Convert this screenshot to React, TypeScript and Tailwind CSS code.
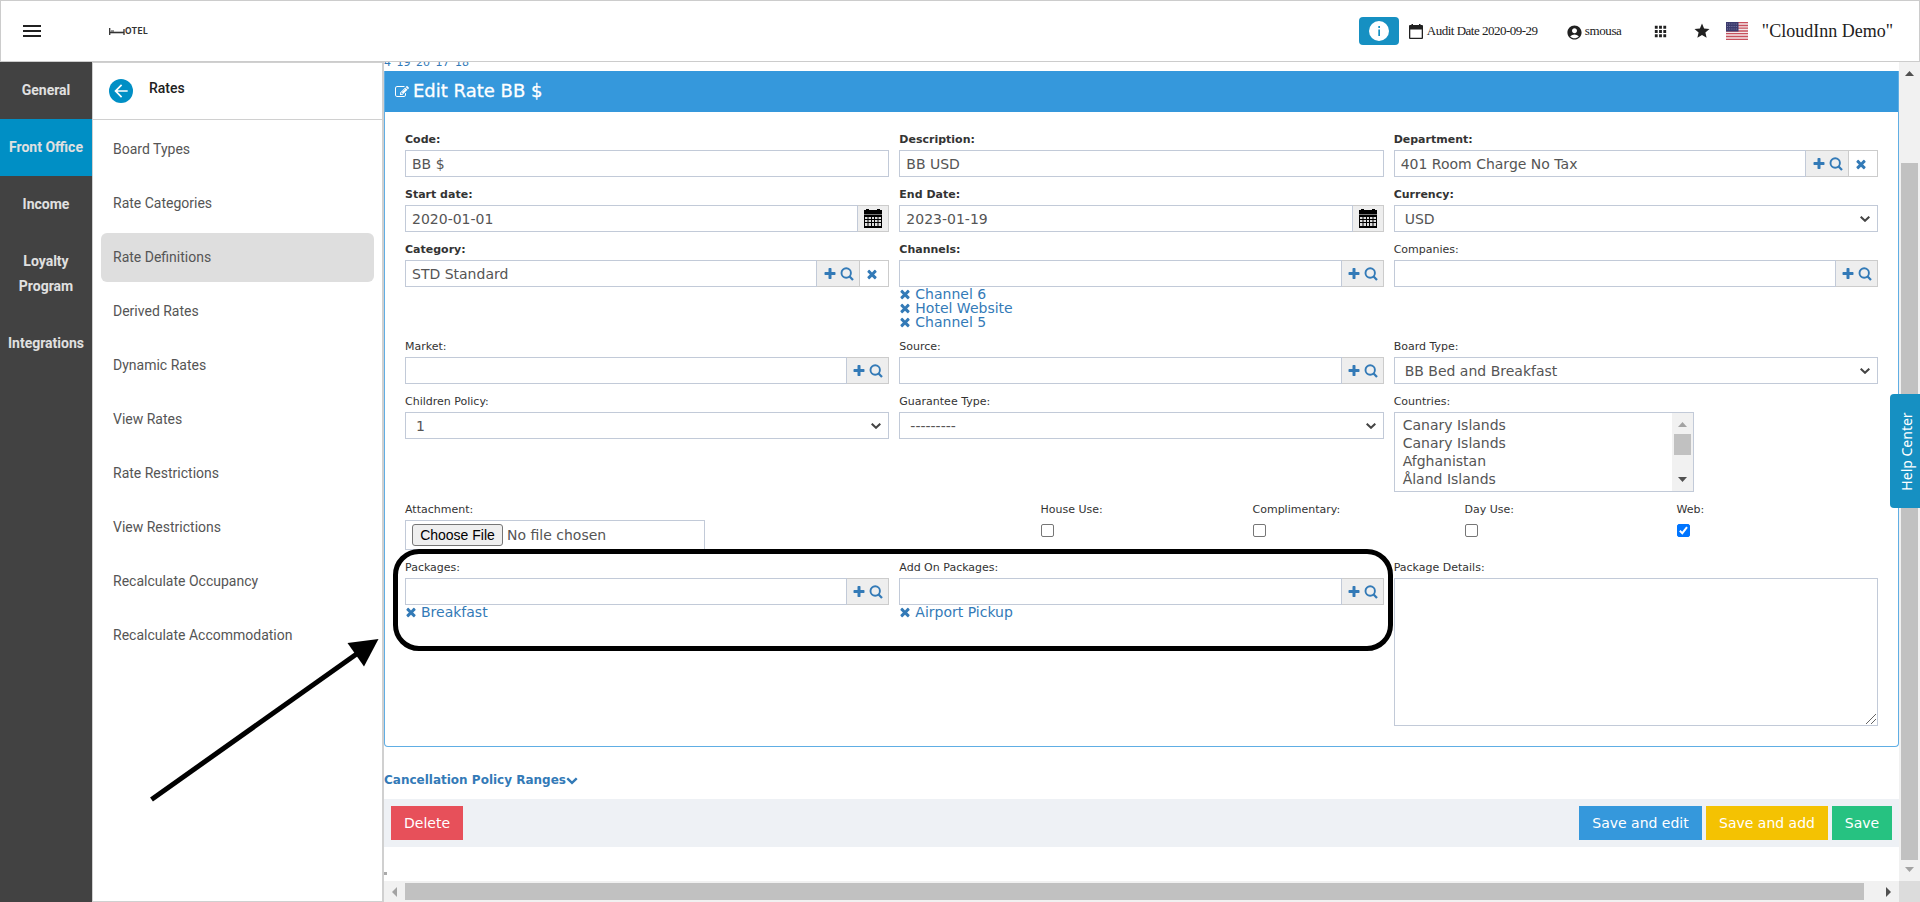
import type { ReactNode } from 'react';
import { MdAccountCircle, MdApps, MdArrowBack, MdMenu, MdStar } from 'react-icons/md';

const PATHS = {
  plus: 'M1600 736v192q0 40-28 68t-68 28h-416v416q0 40-28 68t-68 28h-192q-40 0-68-28t-28-68v-416h-416q-40 0-68-28t-28-68v-192q0-40 28-68t68-28h416v-416q0-40 28-68t68-28h192q40 0 68 28t28 68v416h416q40 0 68 28t28 68z',
  times:
    'M1490 1322q0 40-28 68l-136 136q-28 28-68 28t-68-28l-294-294-294 294q-28 28-68 28t-68-28l-136-136q-28-28-28-68t28-68l294-294-294-294q-28-28-28-68t28-68l136-136q28-28 68-28t68 28l294 294 294-294q28-28 68-28t68 28l136 136q28 28 28 68t-28 68l-294 294 294 294q28 28 28 68z',
  edit: 'M888 1184l116-116-152-152-116 116v56h96v96h56zm440-720q-16-16-33 1l-350 350q-17 17-1 33t33-1l350-350q17-17 1-33zm80 594v190q0 119-84.5 203.5t-203.5 84.5h-832q-119 0-203.5-84.5t-84.5-203.5v-832q0-119 84.5-203.5t203.5-84.5h832q63 0 117 25 15 7 18 23 3 17-9 29l-49 49q-14 14-32 8-23-6-45-6h-832q-66 0-113 47t-47 113v832q0 66 47 113t113 47h832q66 0 113-47t47-113v-126q0-13 9-22l64-64q15-15 35-7t20 29zm-96-738l288 288-672 672h-288v-288zm444 132l-92 92-288-288 92-92q28-28 68-28t68 28l152 152q28 28 28 68t-28 68z',
  chevron:
    'M1683 808l-742 741q-19 19-45 19t-45-19l-742-741q-19-19-19-45.5t19-45.5l166-165q19-19 45-19t45 19l531 531 531-531q19-19 45-19t45 19l166 165q19 19 19 45.5t-19 45.5z',
};

function Icon({ name, className }: { name: keyof typeof PATHS; className: string }) {
  return (
    <svg viewBox="0 0 1792 1792" fill="currentColor" className={className}>
      <path d={PATHS[name]} />
    </svg>
  );
}

const modules = ['General', 'Front Office', 'Income', 'Loyalty Program', 'Integrations'];

const rateLinks = [
  'Board Types',
  'Rate Categories',
  'Rate Definitions',
  'Derived Rates',
  'Dynamic Rates',
  'View Rates',
  'Rate Restrictions',
  'View Restrictions',
  'Recalculate Occupancy',
  'Recalculate Accommodation',
];

function Field({ label, required, children }: { label: string; required?: boolean; children?: ReactNode }) {
  return (
    <div className="min-w-0">
      <div className={`h-[22px] whitespace-nowrap text-[11px] leading-6 text-[#333] ${required ? 'font-bold' : ''}`}>{label}</div>
      {children}
    </div>
  );
}

function TextBox({ value }: { value: string }) {
  return <div className="h-[27px] min-w-0 flex-1 border border-[#c2cad8] pl-1.5 text-[14px] leading-[27px]">{value}</div>;
}

function Lookup({ value = '', clearable }: { value?: string; clearable?: boolean }) {
  return (
    <div className="flex h-[27px]">
      <TextBox value={value} />
      <div
        className={`flex items-center gap-[3px] border border-l-0 border-[#ccc] bg-[#eee] text-[#337ab7] ${
          clearable ? 'w-[43px] pl-[6px]' : 'w-[42px] pl-[5px]'
        }`}
      >
        <Icon name="plus" className="size-[14px]" />
        <svg viewBox="0 0 14 14" className="mt-px size-[14px]" fill="none" stroke="currentColor">
          <circle cx="6.200" cy="6" r="4.700" strokeWidth="1.900" />
          <path d="m9.600 9.400 3.400 3.600" strokeWidth="2.200" />
        </svg>
      </div>
      {clearable && (
        <div className="flex w-[29px] items-center border border-l-0 border-[#ccc] pl-[5px] text-[#337ab7]">
          <Icon name="times" className="mt-px size-[14px]" />
        </div>
      )}
    </div>
  );
}

function DateBox({ value }: { value: string }) {
  return (
    <div className="flex h-[27px]">
      <TextBox value={value} />
      <div className="flex w-[31px] items-center justify-center border border-l-0 border-[#ccc] bg-[#eee]">
        <svg viewBox="0 0 18 19" className="h-[19px] w-[18px]">
          <path d="M0 1h2V0h3v1h8V0h3v1h2v4H0z" fill="#000" />
          <path d="M0 6h18v13H0z" fill="#000" />
          <path d="M0 5.5h18" stroke="#777" />
          <path
            d="M1 8h2.500v2H1zM4.500 8H7v2H4.500zM8 8h2v2H8zM11 8h2.500v2H11zM14.500 8H17v2h-2.500zM1 11h2.500v2H1zM4.500 11H7v2H4.500zM8 11h2v2H8zM11 11h2.500v2H11zM14.500 11H17v2h-2.500zM1 14h2.500v3H1zM4.500 14H7v3H4.500zM8 14h2v3H8zM11 14h2.500v3H11zM14.500 14H17v3h-2.500z"
            fill="#ddd"
          />
        </svg>
      </div>
    </div>
  );
}

function SelectBox({ value }: { value: string }) {
  return (
    <div className="flex h-[27px] items-center justify-between border border-[#c2cad8] pr-[7px] pl-2.5 text-[14px] leading-[27px]">
      <span className="h-[25px]">{value}</span>
      <svg viewBox="0 0 10 6" className="h-[6px] w-[10px]" fill="none" stroke="#444" strokeWidth="2">
        <path d="M.7.7 5 4.8 9.3.7" />
      </svg>
    </div>
  );
}

function Chosen({ items }: { items: string[] }) {
  return (
    <ul className="text-[14px] leading-[14px] text-[#337ab7]">
      {items.map((item) => (
        <li key={item} className="flex h-[14px] items-center gap-[3px]">
          <Icon name="times" className="-ml-[1px] size-[14px]" />
          {item}
        </li>
      ))}
    </ul>
  );
}

function Check({ label, checked }: { label: string; checked?: boolean }) {
  return (
    <div className="w-[212px] shrink-0">
      <Field label={label}>
        <div
          className={`mt-1 flex size-[13px] items-center justify-center rounded-[2px] border ${
            checked ? 'border-[#0075ff] bg-[#0075ff]' : 'border-[#767676] bg-white'
          }`}
        >
          {checked && (
            <svg viewBox="0 0 11 11" className="size-[11px] shrink-0" fill="none" stroke="#fff" strokeWidth="2">
              <path d="M1.8 5.8 4.3 8.2 9 2.2" />
            </svg>
          )}
        </div>
      </Field>
    </div>
  );
}

function Flag() {
  return (
    <svg viewBox="0 0 22 18" className="h-[18px] w-[22px]">
      <path d="M0 0h22v18H0z" fill="#f3e9ea" />
      <path d="M0 .7h22M0 3.500h22M0 6.200h22M0 9h22M0 11.700h22M0 14.500h22M0 17.300h22" stroke="#c8515e" strokeWidth="1.3" />
      <path d="M0 0h12.500v9.500H0z" fill="#3c3b6e" />
      <path d="M1 2h11M1 4.500h11M1 7h11" stroke="#8e8eb0" strokeDasharray="1 1.200" strokeWidth=".8" />
    </svg>
  );
}

function Header() {
  return (
    <header className="flex h-[62px] shrink-0 items-center border border-[#ccc] bg-white text-[#212121]">
      <MdMenu className="ml-[19px] size-6" />
      {/* bed shaped H, then the rest of the word */}
      <div className="ml-[65px] flex items-center font-['Inter']">
        <svg viewBox="0 0 16 7" className="h-[7px] w-4" fill="none" stroke="#333">
          <path d="M.7 0v7M15 1v6" strokeWidth="1.300" />
          <path d="M1 4.500h14" strokeWidth="1.600" />
          <path d="M2 3h3" />
        </svg>
        <span className="text-[8.5px] leading-[7px] font-bold tracking-[0.3px] text-[#333]">OTEL</span>
      </div>
      <div className="ml-auto flex items-center font-['Liberation_Serif']">
        <div className="flex h-7 w-10 items-center justify-center rounded bg-[#1690c2]">
          <svg viewBox="0 0 20 20" className="size-5">
            <circle cx="10" cy="10" r="10" fill="#fff" />
            <path d="M9.300 5h1.700v2H9.300zM9.300 8.500H11V15H9.300z" fill="#1690c2" />
          </svg>
        </div>
        <svg viewBox="0 0 14 15" className="ml-[10px] h-[15px] w-[14px]" fill="#212121">
          <path d="M1 1h1.500V0H4v1h6V0h1.500v1H13a1 1 0 0 1 1 1v12a1 1 0 0 1-1 1H1a1 1 0 0 1-1-1V2a1 1 0 0 1 1-1zm.3 4.500v8.200h11.400V5.500z" />
        </svg>
        <span className="ml-[4px] w-[111px] text-[13px] tracking-[-0.5px] whitespace-nowrap">Audit Date 2020-09-29</span>
        <MdAccountCircle className="mt-[3px] ml-[28px] size-[17px]" />
        <span className="ml-[2px] w-[37px] text-[13px] tracking-[-0.4px]">smousa</span>
        <MdApps className="ml-[30px] size-[17px]" />
        <MdStar className="ml-[24px] size-[18px]" />
        <div className="ml-[15px]">
          <Flag />
        </div>
        <span className="mr-[26px] ml-[14px] text-[18px] whitespace-nowrap">&quot;CloudInn Demo&quot;</span>
      </div>
    </header>
  );
}

function ModuleRail() {
  return (
    <nav className="w-[92px] shrink-0 bg-[#424242] text-center font-['Roboto'] text-[14px] leading-[25px] font-bold text-[#e0e0e0]">
      {modules.map((name) => (
        <div key={name} className={`px-1 py-4 ${name === 'Front Office' ? 'bg-[#008fc5]' : ''}`}>
          {name}
        </div>
      ))}
    </nav>
  );
}

function RatesMenu() {
  return (
    <aside className="w-[292px] shrink-0 border border-r-2 border-[#d0d0d0] bg-white font-['Roboto'] text-[14px]">
      <div className="flex h-[57px] items-center border-b border-[#d0d0d0] pl-4">
        <div className="flex size-6 items-center justify-center rounded-full bg-[#008fc5] text-white">
          <MdArrowBack className="size-5" />
        </div>
        <span className="mb-1.5 ml-4 font-medium text-[#212121]">Rates</span>
      </div>
      <div className="flex flex-col gap-[5px] px-2 pt-[5px]">
        {rateLinks.map((name) => (
          <div
            key={name}
            className={`h-[49px] rounded-md pl-3 leading-[48px] text-[#555] ${name === 'Rate Definitions' ? 'bg-[#dedede]' : ''}`}
          >
            {name}
          </div>
        ))}
      </div>
    </aside>
  );
}

function Countries() {
  return (
    <div className="flex h-20 w-[300px] border border-[#c2cad8] text-[14px] leading-[18px]">
      <div className="flex-1 pt-[3px] pl-2">
        <div>Canary Islands</div>
        <div>Canary Islands</div>
        <div>Afghanistan</div>
        <div>Åland Islands</div>
      </div>
      <div className="flex w-[21px] flex-col items-center bg-[#f1f1f1]">
        <svg viewBox="0 0 9 5" className="mt-[9px] h-[5px] w-[9px]" fill="#a3a3a3">
          <path d="M4.500 0 9 5H0z" />
        </svg>
        <div className="mt-[7px] h-[21px] w-[17px] bg-[#c1c1c1]" />
        <svg viewBox="0 0 9 5" className="mt-[22px] h-[5px] w-[9px]" fill="#505050">
          <path d="M4.500 5 9 0H0z" />
        </svg>
      </div>
    </div>
  );
}

function RateForm() {
  return (
    <section className="mt-[9px] h-[676px] shrink-0 rounded-b-sm border border-t-0 border-[#60aee4]">
      <h1 className="flex h-[41px] items-center gap-1 bg-[#3598dc] pl-[10px] text-[18px] text-white">
        <Icon name="edit" className="size-[14px]" />
        <span className="-mt-[3px] [-webkit-text-stroke:0.3px_white]">Edit Rate BB $</span>
      </h1>
      <div className="flex flex-col gap-1.5 pt-4 pr-5 pl-5">
        <div className="grid grid-cols-3 gap-x-2.5 gap-y-1.5">
          <Field label="Code:" required>
            <div className="flex"><TextBox value="BB $" /></div>
          </Field>
          <Field label="Description:" required>
            <div className="flex"><TextBox value="BB USD" /></div>
          </Field>
          <Field label="Department:" required>
            <Lookup value="401 Room Charge No Tax" clearable />
          </Field>
          <Field label="Start date:" required>
            <DateBox value="2020-01-01" />
          </Field>
          <Field label="End Date:" required>
            <DateBox value="2023-01-19" />
          </Field>
          <Field label="Currency:" required>
            <SelectBox value="USD" />
          </Field>
          <Field label="Category:" required>
            <Lookup value="STD Standard" clearable />
          </Field>
          <Field label="Channels:" required>
            <Lookup />
            <Chosen items={['Channel 6', 'Hotel Website', 'Channel 5']} />
          </Field>
          <Field label="Companies:">
            <Lookup />
          </Field>
          <Field label="Market:">
            <Lookup />
          </Field>
          <Field label="Source:">
            <Lookup />
          </Field>
          <Field label="Board Type:">
            <SelectBox value="BB Bed and Breakfast" />
          </Field>
          <Field label="Children Policy:">
            <SelectBox value="1" />
          </Field>
          <Field label="Guarantee Type:">
            <SelectBox value="---------" />
          </Field>
          <Field label="Countries:">
            <Countries />
          </Field>
        </div>
        <div className="flex">
          <div className="w-[635.5px] shrink-0">
            <Field label="Attachment:">
              <div className="flex h-[30px] w-[300px] items-center border border-[#c2cad8] pl-1.5 text-[14px]">
                <span className="h-[22px] w-[91px] rounded-[3px] border border-[#767676] bg-[#efefef] text-center font-['Liberation_Sans'] text-[14px] leading-5 text-black">
                  Choose File
                </span>
                <span className="ml-1">No file chosen</span>
              </div>
            </Field>
          </div>
          <Check label="House Use:" />
          <Check label="Complimentary:" />
          <Check label="Day Use:" />
          <Check label="Web:" checked />
        </div>
        <div className="grid grid-cols-3 gap-x-2.5">
          <Field label="Packages:">
            <Lookup />
            <Chosen items={['Breakfast']} />
          </Field>
          <Field label="Add On Packages:">
            <Lookup />
            <Chosen items={['Airport Pickup']} />
          </Field>
          <Field label="Package Details:">
            <div className="flex h-[148px] items-end justify-end border border-[#c2cad8] p-px">
              <svg viewBox="0 0 10 10" className="size-[10px]" stroke="#666" fill="none">
                <path d="M0 10 10 0M5 10l5-5" />
              </svg>
            </div>
          </Field>
        </div>
      </div>
    </section>
  );
}

function Actions() {
  return (
    <div className="flex h-12 shrink-0 items-center gap-1 bg-[#eef1f5] px-[7px] text-center text-[14px] leading-[34px] text-white">
      <div className="mr-auto h-[34px] w-[72px] bg-[#e7505a]">Delete</div>
      <div className="h-[34px] w-[123px] bg-[#3598dc]">Save and edit</div>
      <div className="h-[34px] w-[122px] bg-[#f4c202]">Save and add</div>
      <div className="h-[34px] w-[60px] bg-[#26c281]">Save</div>
    </div>
  );
}

export default function App() {
  return (
    <div className="relative flex h-[902px] w-[1920px] flex-col overflow-hidden bg-white font-['DejaVu_Sans'] text-[#555]">
      <Header />
      <div className="flex min-h-0 flex-1">
        <ModuleRail />
        <RatesMenu />
        <div className="flex w-[1515px] shrink-0 flex-col">
          <div className="relative flex h-[819px] flex-col overflow-hidden">
            {/* page numbers scrolled half under the header */}
            <div className="absolute -top-[6px] left-0 text-[11px] leading-[14px] text-[#337ab7] [word-spacing:2px]">4 19 20 17 18</div>
            <RateForm />
            <div className="mt-6 flex h-[18px] items-center text-[12px] font-bold text-[#337ab7]">
              Cancellation Policy Ranges
              <Icon name="chevron" className="size-[12px]" />
            </div>
            <div className="h-[10px] shrink-0" />
            <Actions />
            <div className="mt-[25px] size-[3px] bg-[#aaa]" />
          </div>
          <div className="flex h-[21px] items-center bg-[#f1f1f1]">
            <svg viewBox="0 0 5 10" className="ml-2 h-[10px] w-[5px]" fill="#a3a3a3">
              <path d="M5 0v10L0 5z" />
            </svg>
            <div className="ml-2 h-[17px] w-[1459px] bg-[#c1c1c1]" />
            <svg viewBox="0 0 5 10" className="ml-[22px] h-[10px] w-[5px]" fill="#505050">
              <path d="M0 0v10l5-5z" />
            </svg>
          </div>
        </div>
        <div className="flex flex-1 flex-col bg-[#f1f1f1]">
          <div className="flex h-[819px] flex-col items-center">
            <svg viewBox="0 0 9 5" className="mt-[9px] h-[5px] w-[9px] shrink-0" fill="#505050">
              <path d="M4.500 0 9 5H0z" />
            </svg>
            <div className="mt-[87px] h-[697px] w-[17px] shrink-0 bg-[#c1c1c1]" />
            <svg viewBox="0 0 9 5" className="mt-[7px] h-[5px] w-[9px] shrink-0" fill="#a3a3a3">
              <path d="M4.500 5 9 0H0z" />
            </svg>
          </div>
          <div className="flex-1 bg-[#dcdcdc]" />
        </div>
      </div>

      {/* help tab over the scrollbar */}
      <div className="absolute top-[394px] right-0 flex h-[114px] w-[30px] items-center justify-center rounded-l bg-[#1690c2] pl-0.5 font-['Noto_Sans'] text-[14px] text-white">
        <span className="-rotate-90 whitespace-nowrap">Help Center</span>
      </div>

      {/* callout marks */}
      <div className="absolute top-[549px] left-[393px] h-[102px] w-[1000px] rounded-[26px] border-[5px] border-black" />
      <svg viewBox="0 0 260 185" className="absolute top-[625px] left-[140px] h-[185px] w-[260px]">
        <path d="M11.500 174.500 218 28" stroke="#000" strokeWidth="5" />
        <path d="M238.500 14 224 41.500 207.500 18z" />
      </svg>
    </div>
  );
}
